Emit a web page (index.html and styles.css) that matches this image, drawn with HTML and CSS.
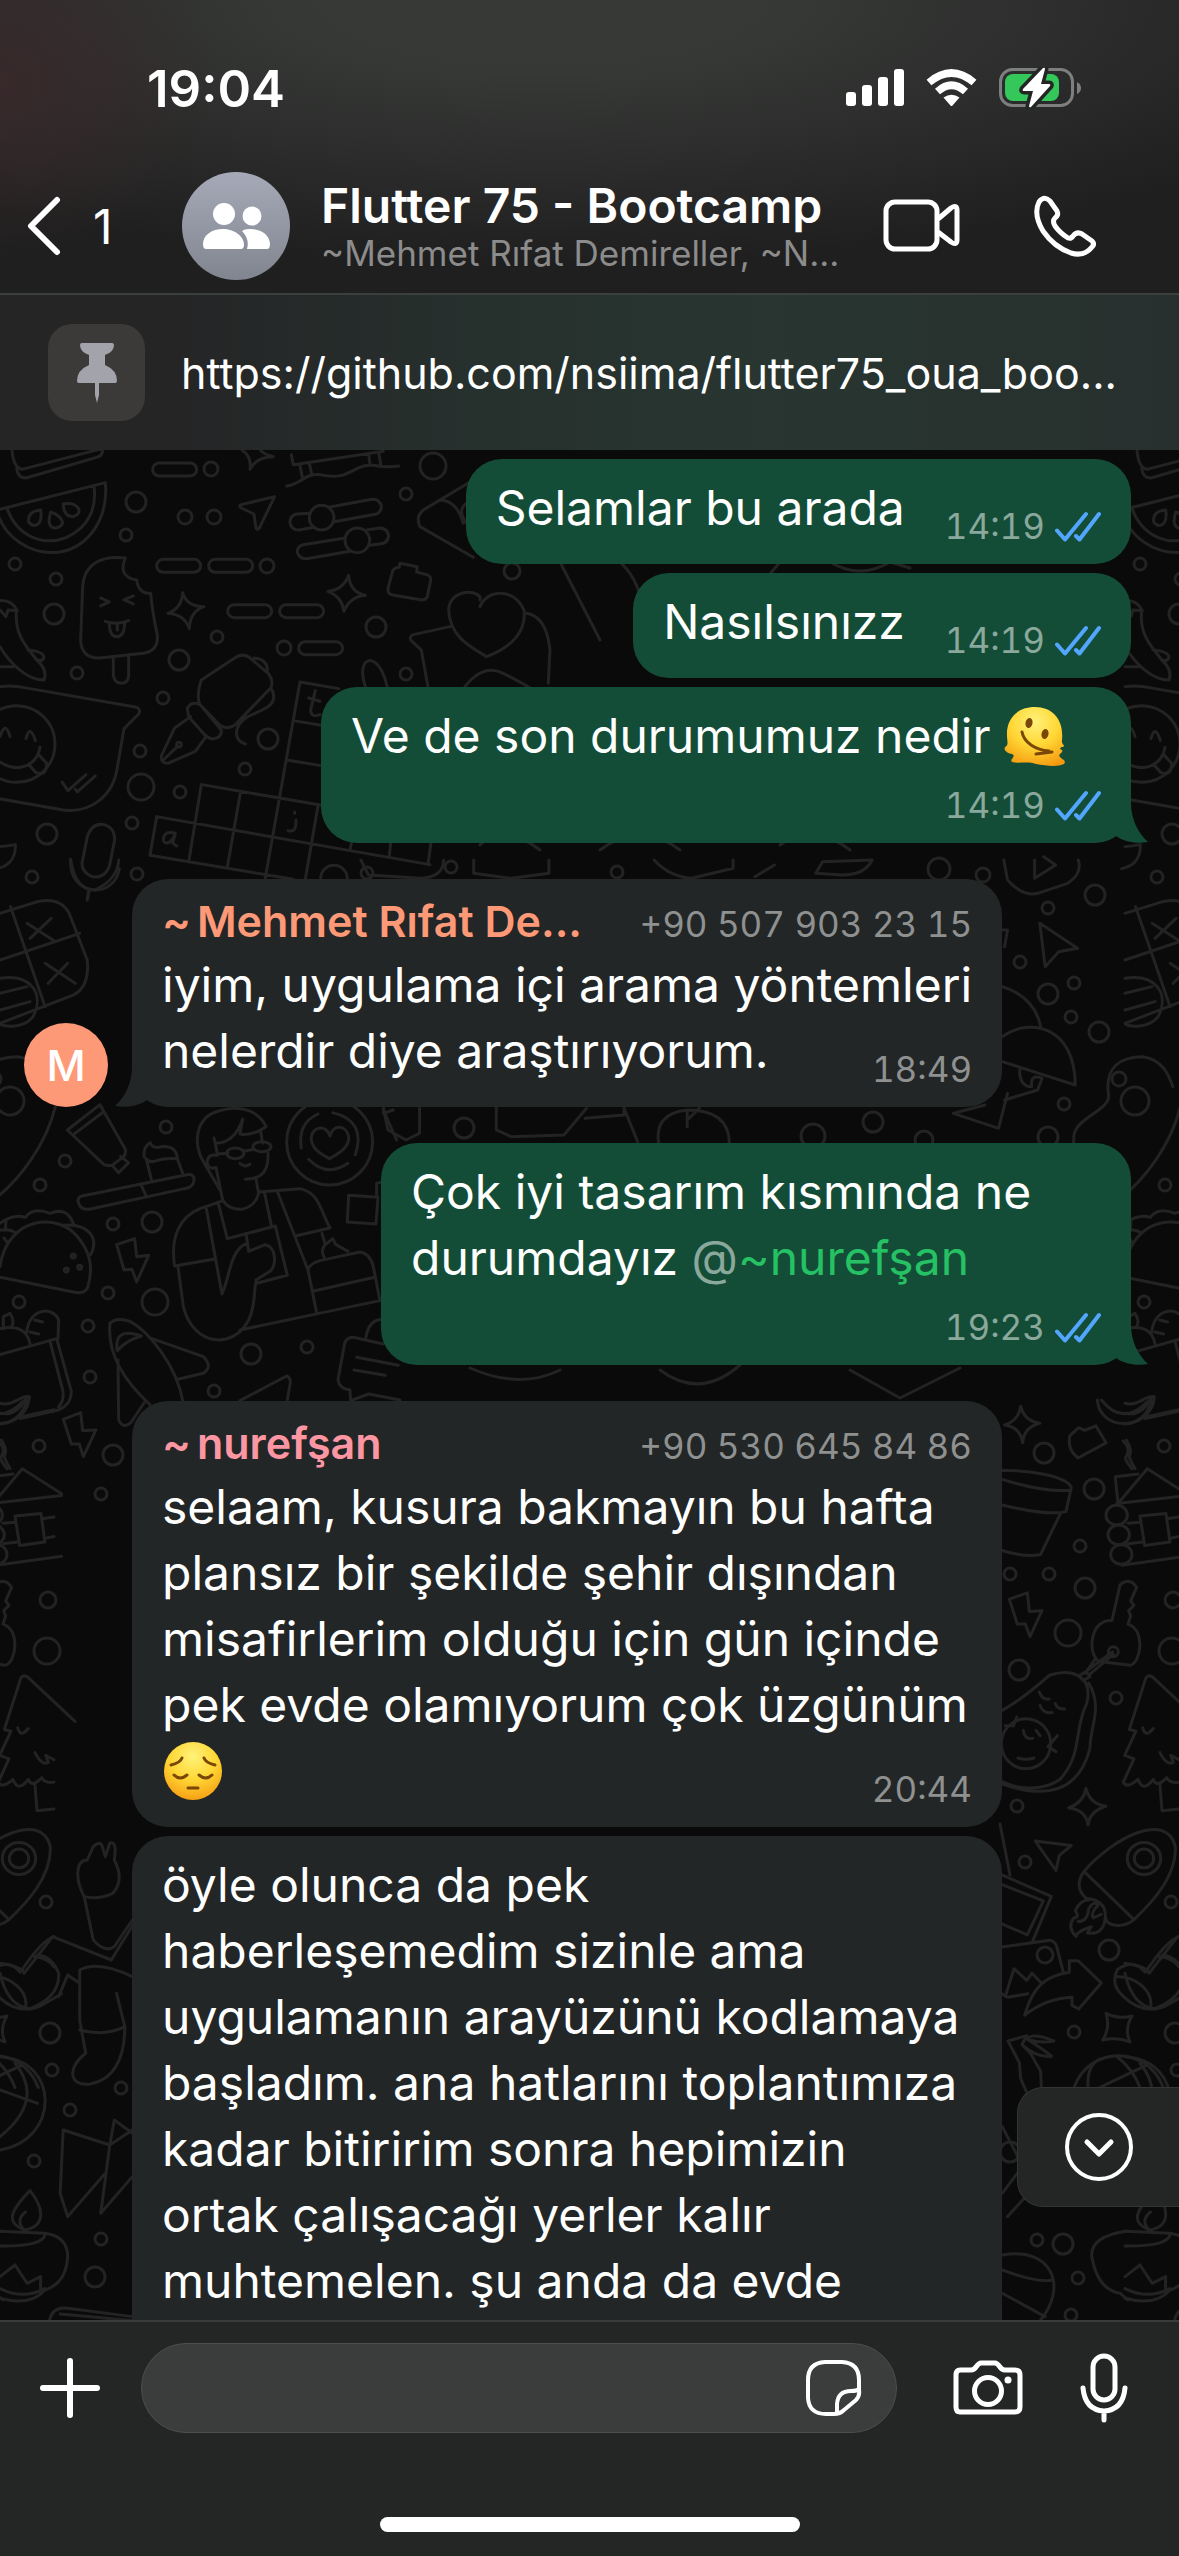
FILE: index.html
```html
<!DOCTYPE html>
<html lang="tr">
<head>
<meta charset="utf-8">
<meta name="viewport" content="width=device-width, initial-scale=1">
<title>Flutter 75 - Bootcamp</title>
<link rel="stylesheet" href="styles.css">
</head>
<body>
<svg class="defs" aria-hidden="true">
  <symbol id="ticks" viewBox="0 0 46 31"><path d="M2 19.500 10 28.500 31 3M21 25l3.500 3.500L44 3" fill="none" stroke="currentColor" stroke-width="4" stroke-linecap="round" stroke-linejoin="round"/></symbol>
  <symbol id="tail" viewBox="0 0 32 40"><path d="M0 0H15C15 16 22 30 32 39 20 41 8 39 0 33Z" fill="currentColor"/></symbol>
</svg>

<header class="header">
  <div class="status">
    <span class="clock">19:04</span>
    <div class="status-icons">
      <svg width="58" height="38" viewBox="0 0 58 38" fill="#fff" role="img" aria-label="Sinyal"><rect x="0" y="23" width="10" height="14" rx="3"/><rect x="16" y="16" width="10" height="21" rx="3"/><rect x="32" y="8" width="10" height="29" rx="3"/><rect x="48" y="0" width="10" height="37" rx="3"/></svg>
      <svg width="51" height="38" viewBox="0 0 51 38" role="img" aria-label="Wi-Fi"><g fill="none" stroke="#fff" stroke-width="7.500"><path d="M3 13.500Q25.500-5.500 48 13.500"/><path d="M11.500 22.500Q25.500 10 39.500 22.500"/></g><path d="M17.500 28.500Q25.500 23 33.500 28.500L26.500 36.500Q25.500 37.500 24.500 36.500Z" fill="#fff"/></svg>
      <svg width="83" height="42" viewBox="0 0 83 42" role="img" aria-label="Pil şarj oluyor"><rect x="1.500" y="2.500" width="72" height="36" rx="12" fill="none" stroke="#7d7f7e" stroke-width="3"/><path d="M78 15q4 2 4 6t-4 6z" fill="#7d7f7e"/><rect x="6" y="7" width="54" height="27" rx="8" fill="#34c759"/><path d="M44 1 24 22q-1 2 1 2h9l-4 15q0 2 2 1L51 19q1-2-1-2h-8l4-15q0-2-2-1z" fill="#fff" stroke="#242625" stroke-width="7" paint-order="stroke"/></svg>
    </div>
  </div>
  <div class="topbar">
    <a class="back" href="#" aria-label="Geri, 1 okunmamış">
      <svg width="35" height="60" viewBox="0 0 35 60" fill="none" stroke="#fff" stroke-width="6" stroke-linecap="round" stroke-linejoin="round"><path d="M30 4 4 30 30 56"/></svg>
      <span>1</span>
    </a>
    <svg class="group-avatar" viewBox="0 0 108 108" role="img" aria-label="Grup">
      <defs><linearGradient id="av" x2="0" y2="1"><stop stop-color="#a6aab8"/><stop offset="1" stop-color="#80858f"/></linearGradient></defs>
      <circle cx="54" cy="54" r="54" fill="url(#av)"/>
      <g fill="#fff"><circle cx="42" cy="42" r="11"/><circle cx="70" cy="44" r="9.500"/><path d="M21 72c0-9 9-15 20-15s21 7 21 16c0 2-1 4-3 4H24c-2 0-3-2-3-5z"/><path d="M60 59c3-2 6-2 9-2 11 0 19 7 19 15 0 3-1 5-3 5H65c2-7 0-13-5-18z"/></g>
    </svg>
    <div class="group">
      <h1 class="group-name">Flutter 75 - Bootcamp</h1>
      <p class="group-members">~Mehmet Rıfat Demireller, ~N...</p>
    </div>
    <button class="icon-button" aria-label="Görüntülü arama"><svg width="78" height="54" viewBox="0 0 78 54" fill="none" stroke="#fff" stroke-width="5" stroke-linejoin="round"><rect x="3" y="3" width="51" height="47" rx="9"/><path d="M55 20 68 9Q74 5 74 11V41Q74 47 68 43L55 33"/></svg></button>
    <button class="icon-button icon-button--call" aria-label="Sesli arama"><svg width="62" height="62" viewBox="0 0 62 62" fill="none" stroke="#fff" stroke-width="5" stroke-linejoin="round"><path d="M5 7Q10 0 16 6L23 16Q25 20 21 23 18 26 21 31 26 38 34 43 37 44 39 41 43 36 48 39L58 46Q61 49 58 52 50 62 37 58 20 52 9 36-1 19 5 7Z"/></svg></button>
  </div>
</header>

<a class="pinned" href="#">
  <span class="pin"><svg width="42" height="60" viewBox="0 0 42 60" fill="#a3a3ab"><path d="M4 2Q4 0 6 0H36Q38 0 38 2 38 9 29 12V22Q41 27 41 38 41 40 39 40H3Q1 40 1 38 1 27 13 22V12Q4 9 4 2Z"/><path d="M19 40h4v12l-2 8-2-8z"/></svg></span>
  <span class="pinned-text">https://github.com/nsiima/flutter75_oua_boo...</span>
</a>

<main class="chat">
  <svg class="wallpaper" aria-hidden="true">
    <defs>
      <g id="doodles">
        <g transform="scale(.3333)">
          <path d="M36 0q4 54 30 58l240-62M50 56q4 28 28 28L290 22q18-4 18-22"/>
          <path d="M0 178 316 98C326 200 270 290 180 306 90 318 10 260-10 180M20 172C50 260 130 290 200 262 270 230 290 170 282 108M122 180q-40 4-36 36 16 20 32 2 8-12 4-38zM152 186q-14 50 16 48 24-6 18-22-8-18-34-26zM190 162q0 38 30 38 22-8 16-24-14-20-46-14z"/>
          <path d="M376 324C300 316 252 344 248 410L242 570Q244 626 300 624L430 610Q476 602 472 556 456 480 452 430 416 432 410 390 352 380 376 324ZM340 622V676Q344 700 364 700 384 700 386 676V614M302 444 328 456 302 468M400 438 372 450 400 462M316 514Q352 526 386 512M328 518Q328 560 350 560 374 560 374 518M352 520V540"/>
          <path d="M548 428Q560 470 612 470 570 484 568 536 554 494 504 490 546 474 548 428ZM1046 376Q1050 426 1096 436 1050 440 1032 484 1026 440 984 424 1030 420 1046 376ZM726 0Q756 20 750 58 770 20 820 20 780 10 776-10"/>
          <rect x="458" y="39" width="132" height="39" rx="20"/><rect x="470" y="328" width="132" height="39" rx="20"/><rect x="626" y="328" width="132" height="39" rx="20"/><rect x="683" y="464" width="132" height="39" rx="20"/><rect x="839" y="464" width="132" height="39" rx="20"/><rect x="896" y="575" width="132" height="39" rx="20"/>
          <path d="M824 140 724 164Q714 168 724 174L762 192 768 234Q772 242 778 234Z"/>
          <path d="M874 14 880 44 1150 4M860 108C910 100 910 70 960 74 1050 96 1060 40 1120 46 1150 52 1170 52 1196 48M900 46 908 86M928 40 936 76M1106 10 1110 44M1136 6 1142 42"/>
          <path d="M930 190 890 192Q870 196 870 218 874 240 896 240L942 232M998 216 1130 192Q1146 184 1144 166 1136 146 1116 148L986 172M1036 264 910 284Q890 290 892 308 900 328 920 326L1050 304M1100 240 1140 234Q1164 236 1166 258 1164 280 1140 282L1108 286"/>
          <circle cx="965" cy="203" r="37"/><circle cx="1072" cy="271" r="37"/>
          <path d="M1420 90 1270 180Q1246 200 1260 230L1420 322M1320 150Q1370 150 1390 220M1400 160Q1370 180 1400 220"/>
          <path d="M1176 370Q1180 352 1198 352L1200 340 1252 350 1250 366 1280 374Q1294 378 1292 392L1282 440Q1278 450 1266 450L1174 434Q1162 428 1164 416Z"/>
          <path d="M1440 450C1450 420 1350 410 1346 480 1350 560 1410 590 1460 620 1540 590 1580 540 1572 480 1540 410 1460 420 1440 470M1350 530 1240 554Q1226 560 1234 572L1264 600 1284 710M1096 710C1080 660 1090 630 1114 632 1140 640 1156 680 1162 712M1580 490Q1640 500 1650 600L1645 700M1395 710Q1450 640 1510 670 1570 700 1600 720"/>
          <path d="M604 690 704 624Q726 608 748 622L806 672Q822 694 812 714L704 826Q680 840 660 826L600 764Q588 740 604 690ZM562 774Q576 752 600 764L664 840Q666 860 644 866 630 870 614 854L566 800ZM572 800 524 834 484 918Q482 940 504 940L586 904 620 858M490 930 532 890M762 624Q804 628 802 664M816 720C840 770 780 780 740 802 700 830 700 870 736 882"/><circle cx="537" cy="884" r="7"/>
          <path d="M0 452Q36 450 50 480C40 560 90 600 110 630 132 650 140 670 132 690 80 690 30 640 0 590M0 480 18 500 24 480 52 482M84 600Q130 604 132 622 126 636 112 630M0 650 40 650"/>
          <path d="M0 710Q40 704 90 716L410 772Q424 780 416 792L372 836 352 952C340 1040 270 1090 190 1080L-10 1045"/>
          <circle cx="50" cy="882" r="115"/><path d="M0 936C50 970 110 950 120 892M0 860Q16 810 30 860M78 866Q90 820 106 872M86 944 108 968Q140 980 140 940L116 914M186 996 204 1022 258 974M226 1018 232 1026 286 978"/>
          <path d="M900 696 1016 716 M900 696 796 1284M880 812 1000 832M860 930 980 950M606 1004 1000 1072M470 1100 1290 1244M604 1004 566 1236M470 1100 450 1216 880 1288M722 1024 682 1252M954 1068 916 1288M1056 1170 1050 1200M1172 1180 1168 1220M1294 1170 1284 1244M926 744 960 754M946 722 932 780Q932 804 960 794M864 1142Q890 1150 888 1110M884 1086V1090M526 1150Q490 1140 490 1172 500 1190 520 1164L526 1150 518 1180 530 1188"/>
          <path d="M262 1160Q276 1118 312 1124 344 1132 344 1170L328 1250Q314 1286 276 1280 246 1268 246 1240ZM212 1228C204 1340 344 1350 358 1256M268 1320 262 1350M0 1190Q20 1188 46 1184C48 1230 20 1250-10 1256"/>
          <circle cx="1002" cy="1286" r="40"/>
        </g>
        <g transform="translate(0 640) scale(.3333)">
          <path d="M166 50C140 160 60 270-20 330M300 44 376 178Q378 196 368 202L336 226Q320 228 312 224L202 120ZM220 134 310 66M362 200 386 218 356 248 336 226"/>
          <path d="M440 212 456 276M432 200Q430 170 450 158 460 178 484 170 530 166 532 206L548 250M438 206Q450 220 470 212T532 206M246 318 560 254Q584 250 582 272 580 292 554 296L268 358Q240 360 234 334 234 320 246 318ZM424 286 438 318"/>
          <path d="M660 300 612 218C580 170 580 80 660 62 730 40 780 70 798 110 770 130 740 136 720 132L728 88C710 140 680 160 646 160L642 144M646 160 652 192 684 190M652 196Q620 190 622 222 630 240 648 232L668 330C690 370 760 370 776 310L768 266M782 124 788 160M804 190C806 240 790 266 736 268M720 220Q736 234 750 222M730 184 762 178"/>
          <ellipse cx="706" cy="190" rx="26" ry="16"/><ellipse cx="786" cy="170" rx="27" ry="15"/>
          <path d="M664 334 600 356C540 380 510 440 524 528L640 508M534 530 550 650C580 770 700 780 746 690 770 640 760 590 770 570M618 350 666 612C690 560 690 480 740 460M654 336 682 446 826 408 862 556 770 580M776 306 900 296C960 310 960 360 990 414L886 438M794 310 814 406M832 304 924 540M738 430 746 484 796 464C830 470 830 530 810 544L768 570M720 720 1140 632M924 540Q930 520 960 512L1080 486Q1110 490 1120 530L1140 632M924 540 950 668M938 604 1124 562M966 430 976 464Q960 480 974 506M976 464 998 446 1008 464 1044 484"/>
          <circle cx="989" cy="156" r="129"/><path d="M904 174Q892 100 954 72M998 68Q1100 92 1066 194M926 208Q980 264 1044 220M990 138C980 100 930 110 934 150 940 180 960 190 988 206 1020 190 1050 170 1046 140 1040 106 1000 100 990 138ZM1150 60 1190 150M1150 70 1180 60"/>
          <path d="M1046 316 1134 322 1128 402 1042 396ZM1130 322V280L1150 276"/>
          <path d="M0 530C20 380 180 360 240 450 270 490 280 530 264 590 256 610 240 610 220 606L0 562M0 400Q40 370 76 382 100 350 150 370 200 350 220 400M190 406C260 400 300 440 272 494M0 420Q30 416 46 428M16 420 18 396M12 444 22 458"/><circle cx="220" cy="498" r="6"/><circle cx="199" cy="540" r="6"/><circle cx="239" cy="532" r="6"/>
          <path d="M350 464 404 446 410 500 446 496 410 576 396 538 372 540ZM190 988 242 968 248 1022 288 1020 250 1100 238 1062 214 1062Z"/>
          <path d="M90 762Q80 700 0 716M80 726C90 650 160 650 176 690L174 748M0 794 170 746 214 904C214 930 200 956 160 964L60 986M150 754 188 900Q194 930 176 950M104 690 128 696M90 726 116 732M10 716V680L30 670Q44 690 36 708M0 940C40 950 60 916 88 920 86 970 40 1000 0 1002M0 970Q50 980 78 924"/>
          <path d="M330 700Q350 680 390 694C440 720 530 820 550 940M330 700C320 800 380 880 450 944M352 782Q340 710 424 738 380 750 352 782ZM456 746 610 800Q640 830 610 850L534 868M354 810 356 990Q370 1020 394 996L434 936M720 932 860 858Q874 864 870 884L862 930"/>
          <path d="M1150 762 1060 742Q1040 742 1034 760L1014 870Q1018 896 1050 900L1052 932 1106 912 1200 930M1070 802 1195 826M1062 840 1156 856M1098 742Q1106 690 1146 688"/>
          <path d="M4 1050Q24 1080 12 1100 20 1120 30 1136"/>
        </g>
        <g transform="translate(1000 950) scale(.3333 .4464)">
          <path d="M62 14Q74 48 120 52 72 60 68 96 60 60 14 56 56 46 62 14ZM258 870Q268 904 318 910 270 920 264 952 258 918 206 914 250 902 258 870ZM318 1374Q356 1388 396 1380 372 1410 390 1438 350 1426 308 1434 332 1406 318 1374Z"/>
          <path d="M210 80 236 62 254 68 288 58 318 96 234 130Q200 110 210 80ZM0 158C80 156 200 170 214 196L198 250Q140 260 0 234M0 176Q130 208 210 202M180 256 122 346Q80 354 0 336"/>
          <path d="M292 0C300 70 440 70 454 0M304 0Q370 60 442 4M436 38 537 22M370 92Q396 110 376 130 380 140 396 154M354 232 442 154 560 210M354 232 346 172 414 166M350 232 560 214M384 276 420 274M384 322 428 318M366 370 560 350M502 266 537 262M508 310 537 306"/><ellipse cx="350" cy="258" rx="32" ry="22"/><ellipse cx="356" cy="302" rx="32" ry="22"/><ellipse cx="364" cy="346" rx="32" ry="22"/><path d="M420 260 498 254 510 318 434 326Z"/>
          <path d="M28 446 82 432 88 474 126 472 90 530 76 502 52 502ZM336 494 360 414Q390 396 410 420L392 450 402 460 386 472 392 484 384 502C440 516 420 590 392 594L298 586C260 570 270 490 336 494M338 564 262 606M286 580 256 612M340 570 270 614M236 618 258 608 270 620 250 628Z"/><ellipse cx="340" cy="564" rx="15" ry="11"/>
          <path d="M0 698C70 670 110 640 150 616 220 600 280 620 260 680 220 740 250 790 180 850 120 880 40 870 0 852M266 634C310 690 270 730 270 780 240 870 150 900 0 858M118 654Q126 672 148 670M120 684Q130 704 156 700M166 680Q172 694 194 692M70 740Q74 762 98 758M108 740 120 752M54 802Q78 808 102 802M16 730 40 730 50 710M172 752 144 776 168 788"/><ellipse cx="78" cy="770" rx="74" ry="56"/>
          <path d="M438 622Q448 614 460 622L600 720M438 622 388 738 408 742 374 796 402 804 370 856Q380 872 414 850 430 880 460 850 470 870 500 846 510 860 537 856M480 862 486 920 537 916M428 734Q436 758 460 736M480 790Q500 820 520 812L512 796 537 806"/>
          <path d="M106 988 214 998 178 1020 168 1054ZM252 1056C340 980 500 920 526 1000 530 1070 450 1130 402 1164 370 1184 320 1180 316 1158M252 1056 402 1164M252 1056Q220 1090 258 1116 320 1120 316 1160 310 1200 262 1194L274 1180Q230 1190 228 1202 200 1180 222 1160 240 1160 226 1144 240 1120 266 1120M234 1168Q262 1170 266 1140 280 1120 294 1132Q270 1150 280 1160L304 1152"/><ellipse cx="432" cy="1027" rx="50" ry="36"/><ellipse cx="432" cy="1027" rx="29" ry="21"/>
          <path d="M0 950 30 1064M0 1062 154 1112 96 1216M0 1084 130 1122 82 1198 0 1172M0 1226 150 1210Q170 1214 172 1230L190 1282M16 1336 42 1274 80 1300 96 1284 124 1306M0 1328 24 1338 84 1330M74 1378C100 1310 140 1290 208 1282V1256L234 1256 304 1306 236 1364 216 1356V1338Q140 1340 74 1378Z"/>
          <path d="M537 1202Q500 1210 436 1282 400 1250 352 1276 330 1310 370 1336 430 1380 500 1356L560 1330M350 1292C400 1290 460 1320 452 1360M476 1246Q520 1250 537 1270"/>
          <path d="M24 1436 80 1424 66 1444 92 1464 122 1504 124 1540M24 1436 58 1484 62 1520 90 1568M66 1444Q80 1410 162 1436 120 1442 82 1432 140 1460 154 1470 110 1474 66 1444"/>
          <path d="M222 1540C270 1445 440 1445 490 1540M264 1540Q260 1490 300 1476M350 1470Q400 1500 420 1540M300 1540 440 1490"/>
        </g>
        <g transform="translate(0 1390) scale(.7519 .3333)">
          <path d="M112 170 124 300Q140 340 152 320L176 240M112 170C100 120 100 60 116 60L124 20Q134 0 136 20L140 50 146 10Q156 0 152 60 166 120 150 160 130 180 112 170M106 390Q130 360 176 410M106 390V540L114 640C90 680 90 740 120 732 150 720 166 660 166 560L155 460M106 570Q140 590 166 560M0 370Q30 380 32 400L70 290 148 360 178 250M0 400Q10 500 40 506 80 470 78 400 70 350 50 345M78 470 90 405 106 430"/>
          <path d="M84 870 146 915 176 870M84 870 80 1060 90 1130 140 1000M146 915 134 1120 176 1010M152 840 176 880M152 840 146 915M0 650C80 660 80 900 0 930M0 750 50 790M20 670Q60 780 0 890"/>
          <path d="M40 1052C10 1120 10 1150 32 1170 60 1160 60 1110 40 1052ZM34 1116Q20 1140 32 1170M0 1174 60 1180Q90 1190 90 1250 88 1330 60 1350 40 1400 0 1375M60 1180Q60 1220 0 1218M0 1346Q30 1380 60 1346M0 1310 20 1275 36 1330 54 1310V1350M66 1440Q70 1400 90 1405L176 1430M80 1422 176 1442"/>
          <path d="M1333 860 1356 960M1333 1060 1366 960M1340 1130 1396 990M1333 1245C1400 1220 1420 1340 1384 1440M1333 1290Q1380 1330 1400 1320M1333 1360 1390 1430M1497 1174Q1450 1190 1452 1250 1460 1350 1490 1360L1500 1380"/>
        </g>
        <g transform="translate(0 410) scale(.7519 .3333)">
          <path d="M94 0Q100 90 126 90 156 60 158 0M118 90 116 120M0 160 50 125Q80 110 92 160L116 300Q120 390 92 410L0 490M14 140 60 440M0 300 106 220M36 190 74 245M40 235 68 175M60 310 100 370M64 370 90 310M0 355C40 340 60 400 44 470 30 510 0 500 0 490M0 400 36 380M0 450 40 425"/>
          <path d="M1335 0 1340 60Q1360 110 1380 100L1420 70Q1440 40 1434 0M1376 0V55L1404 15 1388-10M1383 190 1433 265 1408 275 1390 320ZM1333 210 1340 210 1336 260M1333 380Q1376 410 1384 500M1333 530C1370 470 1430 500 1430 675L1333 605M1356 630Q1356 680 1372 680 1370 640 1386 655L1380 690 1336 720M1268 760 1328 805 1340 700M1268 760 1310 735M1428 830C1430 770 1480 750 1474 700 1470 620 1490 590 1520 590 1550 600 1556 660 1560 680M1428 830Q1430 880 1400 980M480 0 490 45M590 0Q590 50 560 55L490 45M630 0V40L680 55 730 40V0M870 0Q890 50 920 55L975 25V0M1085 40 1094 5 1160 0Q1150 45 1120 45ZM1004 50 1030 15"/>
          <path d="M510 745 516 810 540 840 558 820V745M660 740V810L680 830 750 825 780 745M778 775 830 765V740M830 745 848 845M876 850Q870 760 914 750 970 750 970 850M914 750V800M914 780 930 745"/>
        </g>
        <g>
          <circle cx="211" cy="19" r="7"/><circle cx="136" cy="52" r="10"/><circle cx="126" cy="85" r="6"/><circle cx="185" cy="67" r="7"/><circle cx="214" cy="67" r="7"/><circle cx="15" cy="114" r="6"/><circle cx="56" cy="129" r="6"/><circle cx="267" cy="116" r="7"/><circle cx="54" cy="164" r="10"/><circle cx="217" cy="187" r="6"/><circle cx="179" cy="210" r="10"/><circle cx="284" cy="198" r="7"/><circle cx="376" cy="177" r="10"/><circle cx="406" cy="224" r="6"/><circle cx="77" cy="223" r="6"/><circle cx="163" cy="248" r="6"/><circle cx="140" cy="301" r="6"/><circle cx="268" cy="289" r="10"/><circle cx="245" cy="319" r="6"/><circle cx="141" cy="337" r="13"/><circle cx="180" cy="342" r="6"/><circle cx="132" cy="373" r="6"/><circle cx="47" cy="384" r="10"/><circle cx="32" cy="427" r="6"/><circle cx="137" cy="424" r="6"/><circle cx="451" cy="417" r="6"/><circle cx="367" cy="423" r="6"/><circle cx="433" cy="16" r="13"/><circle cx="406" cy="44" r="6"/>
          <circle cx="166" cy="677" r="6"/><circle cx="65" cy="711" r="6"/><circle cx="40" cy="735" r="6"/><circle cx="113" cy="774" r="6"/><circle cx="152" cy="772" r="10"/><circle cx="108" cy="843" r="6"/><circle cx="155" cy="852" r="13"/><circle cx="19" cy="852" r="6"/><circle cx="88" cy="876" r="6"/><circle cx="90" cy="927" r="6"/><circle cx="251" cy="904" r="10"/><circle cx="307" cy="897" r="6"/><circle cx="214" cy="941" r="6"/><circle cx="39" cy="996" r="6"/><circle cx="113" cy="1005" r="10"/><circle cx="101" cy="1044" r="6"/>
          <circle cx="1044" cy="1003" r="10"/><circle cx="1080" cy="1096" r="6"/><circle cx="1094" cy="1039" r="10"/><circle cx="1010" cy="1124" r="6"/><circle cx="1049" cy="1124" r="6"/><circle cx="1085" cy="1138" r="10"/><circle cx="1068" cy="1183" r="13"/><circle cx="1019" cy="1220" r="10"/><circle cx="1116" cy="1248" r="6"/><circle cx="1017" cy="1356" r="6"/><circle cx="1025" cy="1412" r="6"/><circle cx="1171" cy="1452" r="6"/><circle cx="1045" cy="1505" r="8"/><circle cx="1109" cy="1500" r="10"/><circle cx="1074" cy="1582" r="6"/><circle cx="1173" cy="1150" r="8"/><circle cx="1172" cy="1201" r="13"/>
          <circle cx="50" cy="1583" r="10"/><circle cx="52" cy="1620" r="6"/><circle cx="121" cy="1638" r="6"/><circle cx="70" cy="1660" r="6"/><circle cx="34" cy="1711" r="6"/><circle cx="101" cy="1789" r="6"/><circle cx="95" cy="1827" r="10"/><circle cx="1037" cy="1790" r="6"/><circle cx="1063" cy="1794" r="10"/><circle cx="1078" cy="1828" r="6"/><circle cx="1010" cy="1702" r="10"/><circle cx="1071" cy="1865" r="6"/>
          <circle cx="617" cy="422" r="6"/><circle cx="939" cy="419" r="11"/><circle cx="983" cy="425" r="7"/><circle cx="1095" cy="445" r="10"/><circle cx="1048" cy="458" r="6"/><circle cx="1020" cy="512" r="6"/><circle cx="1048" cy="544" r="10"/><circle cx="1074" cy="533" r="6"/><circle cx="1071" cy="567" r="6"/><circle cx="1099" cy="582" r="10"/><circle cx="1064" cy="654" r="6"/><circle cx="1119" cy="629" r="7"/><circle cx="1135" cy="651" r="14"/><circle cx="464" cy="678" r="10"/><circle cx="873" cy="672" r="10"/><circle cx="813" cy="686" r="12"/><circle cx="924" cy="690" r="9"/><circle cx="512" cy="121" r="8"/><circle cx="1048" cy="687" r="10"/>
          <path d="M560 112 600 190M620 112Q650 140 640 190M780 112 740 160M830 112Q860 130 890 112L910 118M980 112 1050 110M480 395Q500 370 540 400M600 400Q640 370 680 400M780 395Q810 370 850 400M470 918Q520 940 560 920M660 920Q700 950 740 915M850 920 900 948 960 918"/>
        </g>
      </g>
    </defs>
    <g class="doodle-lines">
      <use href="#doodles"/><use href="#doodles" x="1125"/><use href="#doodles" x="-1125"/>
    </g>
  </svg>

  <div class="messages">
    <article class="message message--out"><div class="bubble bubble--short">
      <p class="text">Selamlar bu arada</p>
      <div class="meta"><time>14:19</time><svg class="ticks"><use href="#ticks"/></svg></div>
    </div></article>
    <article class="message message--out"><div class="bubble bubble--short">
      <p class="text">Nasılsınızz</p>
      <div class="meta"><time>14:19</time><svg class="ticks"><use href="#ticks"/></svg></div>
    </div></article>
    <article class="message message--out"><div class="bubble bubble--full">
      <p class="text">Ve de son durumumuz nedir <svg class="emoji" viewBox="0 0 62 62" role="img" aria-label="eriyen yüz"><defs><radialGradient id="face" cx=".5" cy=".25" r=".8"><stop stop-color="#fff27a"/><stop offset=".5" stop-color="#ffd735"/><stop offset="1" stop-color="#f59a10"/></radialGradient></defs><path d="M31 2C12 2 2 15 3 31 3 36 5 40 1 42-1 46 5 49 8 49 13 52 5 54 8 57 14 59 24 56 32 59 42 61 54 62 60 59 63 55 57 54 56 52 53 49 60 48 58 45 55 44 56 42 59 42 62 40 57 40 58 35 60 15 49 2 31 2Z" fill="url(#face)"/><g fill="#7a4706"><ellipse cx="25" cy="18" rx="3.500" ry="5" transform="rotate(12 25 18)"/><ellipse cx="41" cy="29" rx="3.500" ry="5" transform="rotate(12 41 29)"/></g><path d="M18 27C20 38 32 45 45 46M32 49 48 47" fill="none" stroke="#7a4706" stroke-width="3" stroke-linecap="round"/></svg></p>
      <div class="meta meta--below"><time>14:19</time><svg class="ticks"><use href="#ticks"/></svg></div>
      <svg class="tail"><use href="#tail"/></svg>
    </div></article>

    <article class="message message--in message--gap">
      <span class="avatar" aria-hidden="true">M</span>
      <div class="bubble">
        <div class="sender sender--orange"><span>~</span><b>Mehmet Rıfat De...</b><span class="phone">+90 507 903 23 15</span></div>
        <p class="text">iyim, uygulama içi arama yöntemleri<br>nelerdir diye araştırıyorum.</p>
        <div class="meta meta--overlap"><time>18:49</time></div>
        <svg class="tail"><use href="#tail"/></svg>
      </div>
    </article>

    <article class="message message--out message--gap"><div class="bubble bubble--wide">
      <p class="text">Çok iyi tasarım kısmında ne<br>durumdayız <span class="at">@</span><a class="mention" href="#">~nurefşan</a></p>
      <div class="meta meta--below"><time>19:23</time><svg class="ticks"><use href="#ticks"/></svg></div>
      <svg class="tail"><use href="#tail"/></svg>
    </div></article>

    <article class="message message--in message--gap">
      <div class="bubble">
        <div class="sender sender--pink"><span>~</span><b>nurefşan</b><span class="phone">+90 530 645 84 86</span></div>
        <p class="text">selaam, kusura bakmayın bu hafta<br>plansız bir şekilde şehir dışından<br>misafirlerim olduğu için gün içinde<br>pek evde olamıyorum çok üzgünüm<br><svg class="emoji" viewBox="0 0 62 62" role="img" aria-label="dalgın yüz"><circle cx="31" cy="31" r="29" fill="url(#face)"/><g fill="none" stroke="#7a4706" stroke-width="3" stroke-linecap="round"><path d="M9 25Q18 23 20 18M53 25Q44 23 42 18M12 35Q18 41 25 35M37 35Q44 41 50 35M26 48H36"/></g></svg></p>
        <div class="meta meta--overlap"><time>20:44</time></div>
      </div>
    </article>
    <article class="message message--in">
      <div class="bubble bubble--continued">
        <p class="text">öyle olunca da pek<br>haberleşemedim sizinle ama<br>uygulamanın arayüzünü kodlamaya<br>başladım. ana hatlarını toplantımıza<br>kadar bitiririm sonra hepimizin<br>ortak çalışacağı yerler kalır<br>muhtemelen. şu anda da evde</p>
      </div>
    </article>
  </div>

  <button class="scroll-down" aria-label="En alta git"><svg width="72" height="72" viewBox="0 0 72 72" fill="none" stroke="#fff" stroke-linecap="round" stroke-linejoin="round"><circle cx="36" cy="36" r="32" stroke-width="4"/><path d="M24 31 36 43 48 31" stroke-width="5"/></svg></button>
</main>

<footer class="footer">
  <form class="composer">
    <button class="icon-button" type="button" aria-label="Ekle"><svg width="60" height="60" viewBox="0 0 60 60" stroke="#fff" stroke-width="6" stroke-linecap="round"><path d="M30 3V57M3 30H57"/></svg></button>
    <div class="field">
      <input class="field-input" type="text" aria-label="Mesaj">
      <button class="icon-button" type="button" aria-label="Çıkartma"><svg width="56" height="56" viewBox="0 0 56 56" fill="none" stroke="#fff" stroke-width="4" stroke-linejoin="round"><path d="M19 2H36Q53 3 53 20V30Q54 36 50 40L38 50Q34 54 28 54H20Q3 54 2 38V20Q2 3 19 2Z"/><path d="M31 53V44Q32 31 45 31 51 31 53 29"/></svg></button>
    </div>
    <button class="icon-button icon-button--camera" type="button" aria-label="Kamera"><svg width="70" height="56" viewBox="0 0 70 56" fill="none" stroke="#fff" stroke-width="5" stroke-linejoin="round"><path d="M7 10H18Q21 10 23 7 26 3 28 3H42Q44 3 47 7 49 10 52 10H62Q67 10 67 15V47Q67 52 62 52H7Q3 52 3 47V15Q3 10 7 10Z"/><circle cx="35" cy="31" r="13.500"/><circle cx="55" cy="20" r="3.500" fill="#fff" stroke="none"/></svg></button>
    <button class="icon-button icon-button--mic" type="button" aria-label="Sesli mesaj"><svg width="48" height="70" viewBox="0 0 48 70" fill="none" stroke="#fff" stroke-width="5" stroke-linecap="round"><rect x="13" y="3" width="22" height="44" rx="11"/><path d="M3 35Q5 57 24 58 43 57 45 35M24 58V67"/></svg></button>
  </form>
  <div class="home-indicator"></div>
</footer>
</body>
</html>
```
FILE: styles.css
```css
* {
  box-sizing: border-box;
  margin: 0;
  padding: 0;
}

body {
  display: flex;
  flex-direction: column;
  height: 100vh;
  overflow: hidden;
  background: #0a0a0a;
  color: #fff;
  font-family: Inter, "Liberation Sans", sans-serif;
}

svg {
  display: block;
  flex: none;
}

a {
  color: inherit;
  text-decoration: none;
}

button {
  border: 0;
  background: none;
  color: inherit;
}

.defs {
  position: absolute;
  width: 0;
  height: 0;
}

/* Header */

.header {
  padding: 60px 0 13px;
  border-bottom: 2px solid #3b403e;
  background:
    radial-gradient(ellipse 18% 60% at 0 28%, #38292b, rgba(56, 41, 43, 0)),
    radial-gradient(ellipse 75% 90% at 46% 0, #373937 25%, rgba(55, 57, 55, 0)),
    #1f1f1f;
}

.status {
  display: flex;
  align-items: center;
  justify-content: space-between;
  height: 56px;
  padding: 0 97px 0 147px;
}

.clock {
  font-size: 51px;
  font-weight: 600;
}

.status-icons {
  display: flex;
  align-items: center;
  gap: 22px;
}

.topbar {
  display: flex;
  align-items: center;
  height: 108px;
  margin-top: 56px;
  padding-right: 83px;
}

.back {
  display: flex;
  align-items: center;
  gap: 31px;
  width: 182px;
  padding-left: 27px;
  font-size: 48px;
}

.group-avatar {
  width: 108px;
  height: 108px;
}

.group {
  flex: 1;
  min-width: 0;
  padding: 2px 24px 0 31px;
  white-space: nowrap;
}

.group-name {
  font-size: 48px;
  font-weight: 600;
  line-height: 52px;
}

.group-members {
  color: #8c8c8c;
  font-size: 35px;
  line-height: 42px;
}

.icon-button {
  flex: none;
}

.icon-button--call {
  margin-left: 73px;
}

.pinned {
  display: flex;
  flex: none;
  align-items: center;
  gap: 36px;
  height: 155px;
  padding: 0 48px;
  background: linear-gradient(90deg, #252526 15%, #26312e 42%, #283530 65%, #27302e);
}

.pin {
  display: flex;
  flex: none;
  align-items: center;
  justify-content: center;
  width: 97px;
  height: 97px;
  border-radius: 24px;
  background: #3b3a39;
}

.pinned-text {
  font-size: 43px;
  white-space: nowrap;
}

/* Chat */

.chat {
  position: relative;
  flex: 1;
  min-height: 0;
  overflow: hidden;
}

.wallpaper {
  position: absolute;
  inset: 0;
  width: 100%;
  height: 100%;
}

.doodle-lines {
  fill: none;
  stroke: #232323;
  stroke-width: 3px;
  stroke-linecap: round;
  stroke-linejoin: round;
}

#doodles * {
  vector-effect: non-scaling-stroke;
}

.messages {
  position: relative;
  display: flex;
  flex-direction: column;
  gap: 9px;
  padding: 9px 48px 0 24px;
}

.message {
  display: flex;
  align-items: flex-end;
}

.message--gap {
  margin-top: 27px;
}

.message--out {
  justify-content: flex-end;
}

.message--in {
  padding-left: 108px;
}

.bubble {
  position: relative;
  padding: 16px 30px;
  border-radius: 36px;
  background: #144d37;
}

.bubble--short {
  display: flex;
  align-items: flex-end;
  gap: 40px;
}

.bubble--short .text {
  margin-bottom: 7px;
}

.bubble--wide {
  flex: 0 1 750px;
}

.bubble--full {
  flex: 0 1 810px;
}

/* The newest message runs on below the composer */
.bubble--continued {
  padding-bottom: 82px;
}

.message--in .bubble {
  flex: 0 1 870px;
  background: #232626;
}

.text {
  font-size: 48px;
  line-height: 66px;
  white-space: nowrap;
}

.at,
.message--out .meta {
  color: #8aa89b;
}

.mention {
  color: #25c164;
}

.emoji {
  display: inline-block;
  width: 62px;
  height: 62px;
  vertical-align: -14px;
}

.meta {
  display: flex;
  align-items: center;
  justify-content: flex-end;
  gap: 10px;
  color: #8f9191;
  font-size: 35px;
  font-variant-numeric: tabular-nums;
  line-height: 44px;
}

.meta--below {
  margin-top: 14px;
}

.meta--overlap {
  margin-top: -37px;
}

.ticks {
  width: 46px;
  height: 31px;
  color: #53a6fd;
}

.tail {
  position: absolute;
  right: -17px;
  bottom: 0;
  width: 32px;
  height: 40px;
  color: #144d37;
}

.message--in .tail {
  right: auto;
  left: -17px;
  color: #232626;
  transform: scaleX(-1);
}

.avatar {
  width: 84px;
  height: 84px;
  margin-right: 24px;
  margin-left: -108px;
  border-radius: 50%;
  background: #fd9977;
  font-size: 43px;
  font-weight: 500;
  line-height: 84px;
  text-align: center;
}

.sender {
  display: flex;
  align-items: baseline;
  gap: 6px;
  margin-bottom: 2px;
  font-size: 43px;
  font-weight: 600;
  line-height: 52px;
  white-space: nowrap;
}

.sender b {
  font-weight: 600;
}

.sender--orange {
  color: #fd9977;
}

.sender--pink {
  color: #fc96a3;
}

.phone {
  margin-left: auto;
  color: #8f9191;
  font-size: 35px;
  font-variant-numeric: tabular-nums;
  font-weight: 400;
}

.scroll-down {
  position: absolute;
  right: 0;
  bottom: 113px;
  display: flex;
  align-items: center;
  width: 162px;
  height: 120px;
  padding-left: 45px;
  border: 1px solid #333535;
  border-right: 0;
  border-radius: 26px 0 0 26px;
  background: #242625;
}

/* Composer */

.footer {
  flex: none;
  padding-bottom: 24px;
  border-top: 2px solid #3a3c3c;
  background: #242625;
}

.composer {
  display: flex;
  align-items: center;
  padding: 21px 51px 0 40px;
}

.field {
  display: flex;
  flex: 1;
  align-items: center;
  min-width: 0;
  height: 90px;
  margin-left: 41px;
  padding: 0 34px;
  border: 1px solid #4c4e4d;
  border-radius: 45px;
  background: #3b3c3c;
}

.field-input {
  flex: 1;
  width: 100%;
  min-width: 0;
  border: 0;
  outline: 0;
  background: transparent;
  color: #fff;
  font: inherit;
  font-size: 48px;
}

.icon-button--camera {
  margin-left: 56px;
}

.icon-button--mic {
  margin-left: 57px;
}

.home-indicator {
  width: 420px;
  height: 15px;
  margin: 84px auto 0;
  border-radius: 8px;
  background: #fff;
}
```
